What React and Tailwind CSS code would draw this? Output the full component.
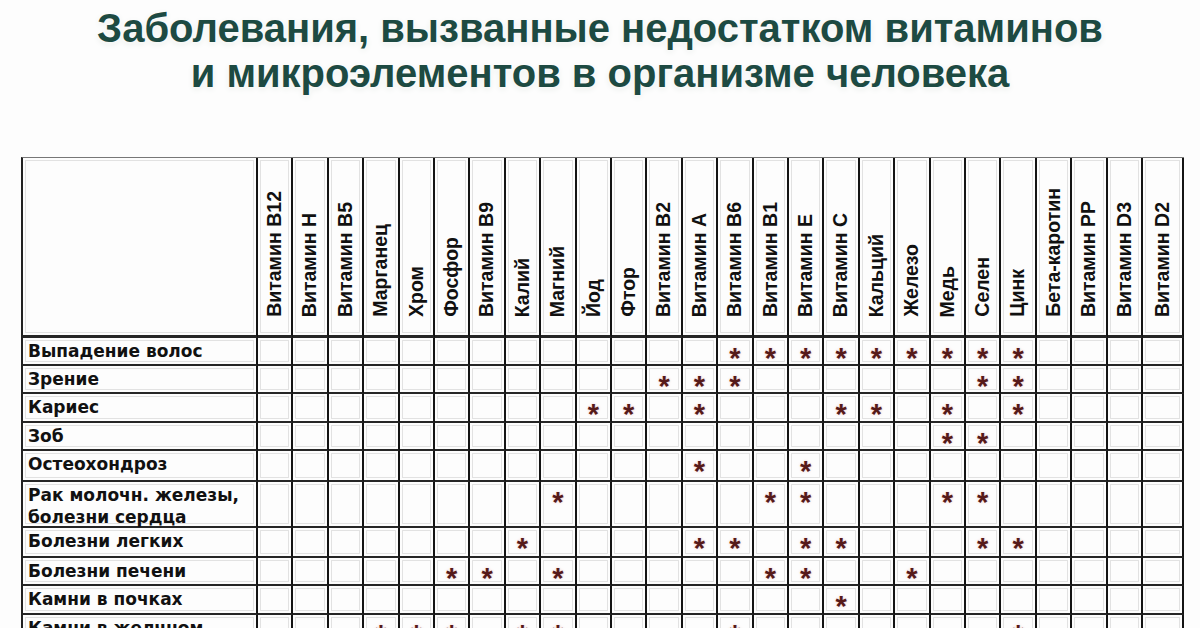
import React from 'react';

const vitamins = [
  'Витамин B12', 'Витамин H', 'Витамин B5', 'Марганец', 'Хром', 'Фосфор', 'Витамин B9',
  'Калий', 'Магний', 'Йод', 'Фтор', 'Витамин B2', 'Витамин A', 'Витамин B6', 'Витамин B1',
  'Витамин E', 'Витамин C', 'Кальций', 'Железо', 'Медь', 'Селен', 'Цинк', 'Бета-каротин',
  'Витамин PP', 'Витамин D3', 'Витамин D2'
];

const diseases = [
  { name: ['Выпадение волос'], marks: [13, 14, 15, 16, 17, 18, 19, 20, 21] },
  { name: ['Зрение'], marks: [11, 12, 13, 20, 21] },
  { name: ['Кариес'], marks: [9, 10, 12, 16, 17, 19, 21] },
  { name: ['Зоб'], marks: [19, 20] },
  { name: ['Остеохондроз'], marks: [12, 15] },
  { name: ['Рак молочн. железы,', 'болезни сердца'], marks: [8, 14, 15, 19, 20] },
  { name: ['Болезни легких'], marks: [7, 12, 13, 15, 16, 20, 21] },
  { name: ['Болезни печени'], marks: [5, 6, 8, 14, 15, 18] },
  { name: ['Камни в почках'], marks: [16] },
  { name: ['Камни в желчном', 'пузыре'], marks: [3, 4, 5, 7, 8, 13, 21] }
];

const cell = 'border-r-2 border-b-2 border-r-[#141414] border-b-[#262626] shadow-[inset_0_0_0_2px_#fdfdfd,inset_0_0_0_3px_#e2e2e2]';

export default function App() {
  return (
    <div className="h-[628px] w-[1200px] overflow-hidden bg-[#fdfdfd]">
      {/* Title */}
      <div className="pt-[6px] text-center font-['Liberation_Sans',Arial,sans-serif] text-[40px] font-bold leading-[45px] text-[#1d4a42] [text-shadow:0_0_4px_#ffffff,0_2px_6px_#e8ece9]">
        <div>Заболевания, вызванные недостатком витаминов</div>
        <div>и микроэлементов в организме человека</div>
      </div>

      {/* Table */}
      <div className="ml-[21px] mt-[61px] grid w-[1163px] grid-cols-[235px_repeat(25,minmax(0,1fr))_41px] grid-rows-[180px_28px_28px_29px_28px_31px_46px_30px_28px_29px_46px] border-l-2 border-t border-l-[#222] border-t-[#777]">
        <div className={cell + ' border-b-[3px] border-b-[#111]'} />
        {vitamins.map((v) => (
          <div key={v} className={cell + ' flex items-end justify-center border-b-[3px] border-b-[#111] pb-[18px]'}>
            <span className="rotate-180 font-['Liberation_Sans',Arial,sans-serif] text-[19.5px] font-bold leading-none text-[#111] [writing-mode:vertical-rl]">
              {v}
            </span>
          </div>
        ))}

        {diseases.map((d) => (
          <React.Fragment key={d.name[0]}>
            <div className={cell + " whitespace-nowrap pl-[5px] pt-[2px] font-['DejaVu_Sans',Verdana,sans-serif] text-[17px] font-bold leading-[22px] text-[#111]"}>
              {d.name.map((line) => (
                <div key={line}>{line}</div>
              ))}
            </div>
            {vitamins.map((v, i) => (
              <div key={v} className={cell + ' flex justify-center pt-[15px]'}>
                {d.marks.includes(i) && (
                  <span className="block h-[10px] font-['Liberation_Sans',Arial,sans-serif] text-[29px] font-bold leading-[10px] text-[#561a1a] [text-shadow:0_0_3px_#f1cccc]">
                    *
                  </span>
                )}
              </div>
            ))}
          </React.Fragment>
        ))}
      </div>
    </div>
  );
}
